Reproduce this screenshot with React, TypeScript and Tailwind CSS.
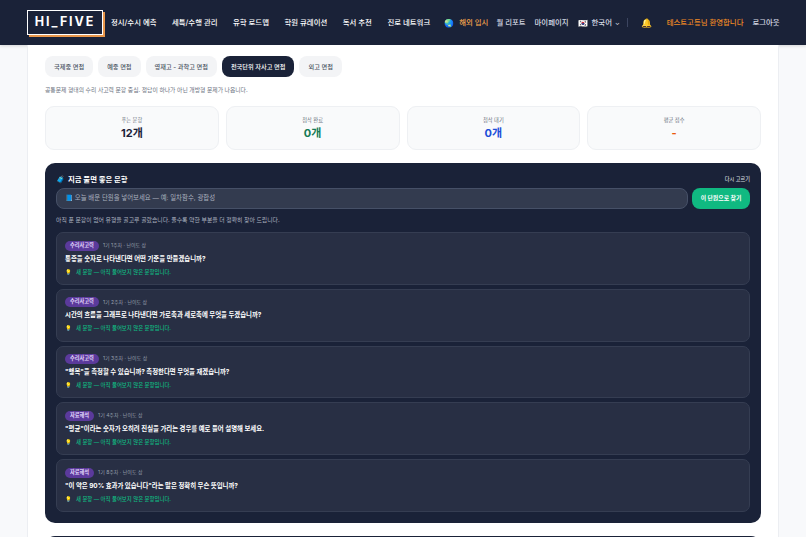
const font = { fontFamily: 'Inter, "Noto Sans CJK KR", "Noto Sans", sans-serif' };

const navItems = ['정시/수시 예측', '세특/수행 관리', '유학 로드맵', '학원 큐레이션', '독서 추천', '진로 네트워크'];
const tabs = ['국제중 면접', '예중 면접', '영재고 - 과학고 면접', '전국단위 자사고 면접', '외고 면접'];
const stats = [
  { label: '푸는 문항', value: '12개', color: 'text-[#1a2238]' },
  { label: '첨삭 완료', value: '0개', color: 'text-[#157a55]' },
  { label: '첨삭 대기', value: '0개', color: 'text-[#1d4ed8]' },
  { label: '평균 점수', value: '-', color: 'text-[#ea580c]' },
];
const questions = [
  { tag: '수리사고력', meta: '1기 1주차 · 난이도 상', text: '통증을 숫자로 나타낸다면 어떤 기준을 만들겠습니까?' },
  { tag: '수리사고력', meta: '1기 2주차 · 난이도 상', text: '시간의 흐름을 그래프로 나타낸다면 가로축과 세로축에 무엇을 두겠습니까?' },
  { tag: '수리사고력', meta: '1기 3주차 · 난이도 상', text: '"행복"을 측정할 수 있습니까? 측정한다면 무엇을 재겠습니까?' },
  { tag: '자료해석', meta: '1기 4주차 · 난이도 상', text: '"평균"이라는 숫자가 오히려 진실을 가리는 경우를 예로 들어 설명해 보세요.' },
  { tag: '자료해석', meta: '1기 8주차 · 난이도 상', text: '"이 약은 90% 효과가 있습니다"라는 말은 정확히 무슨 뜻입니까?' },
];

export default function App() {
  return (
    <div style={font} className="h-[537px] w-[806px] overflow-hidden bg-[#f8f9fb]">
      <header className="flex h-[45px] items-center bg-[#1a2238] pl-[27px] shadow-[0_1px_3px_rgba(0,0,0,0.15)]">
        <div className="flex h-[25px] w-[76px] shrink-0 items-center justify-center border border-white bg-[#1a2238] text-[12.5px] font-bold tracking-[1.9px] text-white shadow-[2px_2px_0_#e8964a]">
          HI_FIVE
        </div>
        <nav className="ml-[8px] flex items-center gap-[15.5px] text-[7.4px] font-medium text-white">
          {navItems.map((n) => (
            <span key={n} className="whitespace-nowrap">{n}</span>
          ))}
        </nav>
        <div className="ml-[14px] flex items-center text-[7.4px] font-medium whitespace-nowrap text-[#d7dbe4]">
          <span className="mr-[5px] text-[8px]">🌏</span>
          <span className="mr-[8px] text-[#f4a24c]">해외 입시</span>
          <span className="mr-[9px]">월 리포트</span>
          <span className="mr-[9px]">마이페이지</span>
          <span className="mr-[4px] text-[8px]">🇰🇷</span>
          <span>한국어</span>
          <span className="ml-[3px] text-[6px]">⌄</span>
          <span className="mr-[9px] ml-[7px] h-[9px] w-px bg-[#3c4560]" />
          <span className="mr-[15px] ml-[4px] text-[9px]">🔔</span>
          <span className="mr-[9px] text-[#f08a24]">테스트고등님 환영합니다</span>
          <span>로그아웃</span>
        </div>
      </header>

      <main className="mx-[27px] h-[492px] w-[752px] overflow-hidden border-x border-[#eceef2] bg-white px-[17px] pt-[11px]">
        <div className="flex gap-[5px]">
          {tabs.map((t, i) => (
            <button
              key={t}
              className={`flex h-[21px] items-center rounded-[8px] px-[9px] text-[6.2px] font-medium whitespace-nowrap ${
                i === 3 ? 'bg-[#1a2238] text-white' : 'bg-[#f3f4f6] text-[#4b5563]'
              }`}
            >
              {t}
            </button>
          ))}
        </div>
        <p className="mt-[8px] text-[5.8px] leading-[10px] text-[#6b7280]">
          공통문제 형태의 수리 사고력 문항 중심. 정답이 하나가 아닌 개방형 문제가 나옵니다.
        </p>

        <div className="mt-[11px] grid grid-cols-4 gap-[7px]">
          {stats.map((s) => (
            <div key={s.label} className="flex h-[44px] flex-col items-center justify-center rounded-[9px] border border-[#eef0f3] bg-[#f9fafb]">
              <span className="text-[5.25px] leading-[9px] text-[#6b7280]">{s.label}</span>
              <span className={`text-[11px] leading-[16px] font-bold ${s.color}`}>{s.value}</span>
            </div>
          ))}
        </div>

        <section className="mt-[13px] rounded-[10px] bg-[#1a2238] px-[11px] pt-[11px] pb-[11px] text-white">
          <div className="flex h-[11px] items-center justify-between">
            <span className="text-[7.4px] font-bold"><span className="mr-[3px]">🧳</span>지금 풀면 좋은 문항</span>
            <span className="text-[5.2px] font-medium text-[#d1d5db]">다시 고르기</span>
          </div>
          <div className="mt-[3px] flex gap-[4px]">
            <div className="flex h-[21px] flex-1 items-center rounded-[8px] border border-[#465067] bg-[#333b4f] px-[8px] text-[6.4px] text-[#a9b0be]">
              📘 오늘 배운 단원을 넣어보세요 — 예: 일차함수, 광합성
            </div>
            <button className="flex h-[21px] w-[58px] items-center justify-center rounded-[8px] bg-[#10b981] text-[5.9px] font-bold text-white">
              이 단원으로 찾기
            </button>
          </div>
          <p className="mt-[6px] text-[5.85px] leading-[10px] text-[#aeb4c0]">
            아직 푼 문항이 없어 유형을 골고루 골랐습니다. 풀수록 약한 부분을 더 정확히 찾아 드립니다.
          </p>
          <div className="mt-[7px] flex flex-col gap-[4px]">
            {questions.map((q) => (
              <div key={q.meta} className="h-[52.75px] rounded-[7px] border border-[#353d52] bg-[#282f44] px-[8px] pt-[7px]">
                <div className="flex h-[11px] items-center gap-[4px]">
                  <span className="flex h-[10px] items-center rounded-full bg-[#5b3a9b] px-[5px] text-[5.2px] font-bold text-[#e3d8fb]">{q.tag}</span>
                  <span className="text-[5px] text-[#9aa1b0]">{q.meta}</span>
                </div>
                <div className="mt-[1.5px] text-[6.4px] leading-[12px] font-bold text-white">{q.text}</div>
                <div className="mt-[2px] flex items-center text-[5.4px] leading-[10px] font-medium text-[#10b981]">
                  <span className="mr-[4px]">💡</span>새 문항 — 아직 풀어보지 않은 문항입니다.
                </div>
              </div>
            ))}
          </div>
        </section>
        <div className="mt-[13px] h-[20px] rounded-t-[10px] bg-[#1a2238]" />
      </main>
    </div>
  );
}
